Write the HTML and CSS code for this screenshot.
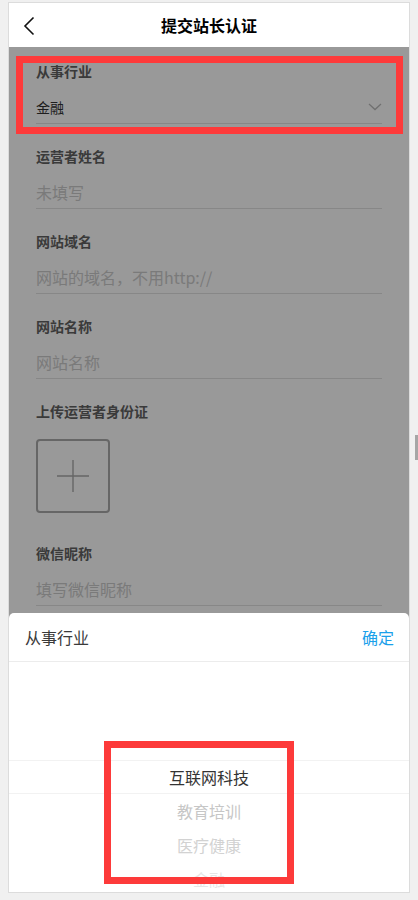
FILE: index.html
```html
<!DOCTYPE html>
<html lang="zh-CN">
<head>
<meta charset="utf-8">
<title>提交站长认证</title>
<link rel="stylesheet" href="styles.css">
</head>
<body>
<div class="phone">
  <div class="nav">
    <svg class="back" width="12" height="20" viewBox="0 0 12 20"><path d="M10.5 1.5 L2 10 L10.5 18.5" fill="none" stroke="#111" stroke-width="1.6"/></svg>
    <div class="nav-title">提交站长认证</div>
  </div>
  <div class="form">
    <div class="field">
      <div class="label">从事行业</div>
      <div class="value-row">
        <span class="value">金融</span>
        <svg class="chev" width="14" height="8" viewBox="0 0 14 8"><path d="M1 1 L7 6.5 L13 1" fill="none" stroke="#bbb" stroke-width="1.3"/></svg>
      </div>
    </div>
    <div class="field">
      <div class="label">运营者姓名</div>
      <div class="value-row"><span class="placeholder">未填写</span></div>
    </div>
    <div class="field">
      <div class="label">网站域名</div>
      <div class="value-row"><span class="placeholder">网站的域名，不用http://</span></div>
    </div>
    <div class="field">
      <div class="label">网站名称</div>
      <div class="value-row"><span class="placeholder">网站名称</span></div>
    </div>
    <div class="field upload-field">
      <div class="label">上传运营者身份证</div>
      <div class="upload">
        <svg width="32" height="32" viewBox="0 0 32 32"><path d="M16 0 V32 M0 16 H32" stroke="#aaa" stroke-width="1.4"/></svg>
      </div>
    </div>
    <div class="field">
      <div class="label">微信昵称</div>
      <div class="value-row"><span class="placeholder">填写微信昵称</span></div>
    </div>
  </div>
  <div class="overlay"></div>
  <div class="sheet">
    <div class="sheet-head">
      <span class="sheet-title">从事行业</span>
      <span class="sheet-ok">确定</span>
    </div>
    <div class="picker">
      <div class="indicator"></div>
      <div class="list">
        <div class="item selected">互联网科技</div>
        <div class="item far1">教育培训</div>
        <div class="item far2">医疗健康</div>
        <div class="item far3">金融</div>
      </div>
    </div>
  </div>
</div>
<div class="mark mark-top"></div>
<div class="mark mark-bottom"></div>
<div class="side-bar"></div>
</body>
</html>
```
FILE: styles.css
```css
* { box-sizing: border-box; }
html, body { margin: 0; }
body {
  background: #f0f0f0;
  padding: 2px 0 0 8px;
  font-family: "Noto Sans CJK SC", "Noto Sans", sans-serif;
  position: relative;
  height: 900px;
  overflow: hidden;
}
.phone {
  width: 402px;
  height: 891px;
  border: 1px solid #dcdcdc;
  background: #fff;
  position: relative;
  overflow: hidden;
}
.nav {
  height: 44px;
  display: flex;
  align-items: center;
  justify-content: center;
  position: relative;
}
.back { position: absolute; left: 14px; top: 13px; }
.nav-title {
  font-size: 16px;
  font-weight: bold;
  color: #000;
}
.form { padding: 14px 27px 0; }
.field { margin-bottom: 22px; }
.label {
  font-size: 14px;
  line-height: 20px;
  font-weight: bold;
  color: #626262;
}
.value-row {
  margin-top: 10px;
  height: 33px;
  border-bottom: 1px solid #e2e2e2;
  display: flex;
  align-items: center;
  justify-content: space-between;
  padding-bottom: 1px;
}
.value { font-size: 14px; color: #333; }
.chev { margin-right: 0; }
.placeholder { font-size: 16px; color: #ccc; }
.upload-field { margin-bottom: 30px; }
.upload {
  margin-top: 18px;
  width: 74px;
  height: 74px;
  border: 2px solid #aaa;
  border-radius: 4px;
  display: flex;
  align-items: center;
  justify-content: center;
}
.overlay {
  position: absolute;
  top: 44px; left: 0; right: 0; bottom: 0;
  background: rgba(0, 0, 0, 0.4);
}
.sheet {
  position: absolute;
  left: 0; right: 0; bottom: 0;
  height: 279px;
  background: #fff;
  border-radius: 5px 5px 0 0;
  display: flex;
  flex-direction: column;
}
.sheet-head {
  height: 49px;
  border-bottom: 1px solid #ececec;
  display: flex;
  align-items: center;
  justify-content: space-between;
  padding: 0 15px 0 16px;
  font-size: 16px;
}
.sheet-title { color: #3a3a3a; }
.sheet-ok { color: #1aa0ea; }
.picker {
  flex: 1;
  position: relative;
  overflow: hidden;
}
.indicator {
  position: absolute;
  left: 0; right: 0;
  top: 98px;
  height: 34px;
  border-top: 1px solid #f2f2f2;
  border-bottom: 1px solid #f2f2f2;
}
.list { padding-top: 98px; }
.item {
  height: 34px;
  line-height: 34px;
  text-align: center;
  font-size: 16px;
}
.selected { color: #333; }
.far1 { color: #c6c6c6; }
.far2 { color: #d2d2d2; }
.far3 { color: #e6e6e6; }
.mark {
  position: absolute;
  border: 7px solid #fd3a3a;
}
.mark-top { left: 16px; top: 56px; width: 387px; height: 78px; }
.mark-bottom { left: 104px; top: 741px; width: 190px; height: 143px; }
.side-bar {
  position: absolute;
  left: 415px; top: 435px;
  width: 3px; height: 25px;
  background: #a6a6a6;
}
```
